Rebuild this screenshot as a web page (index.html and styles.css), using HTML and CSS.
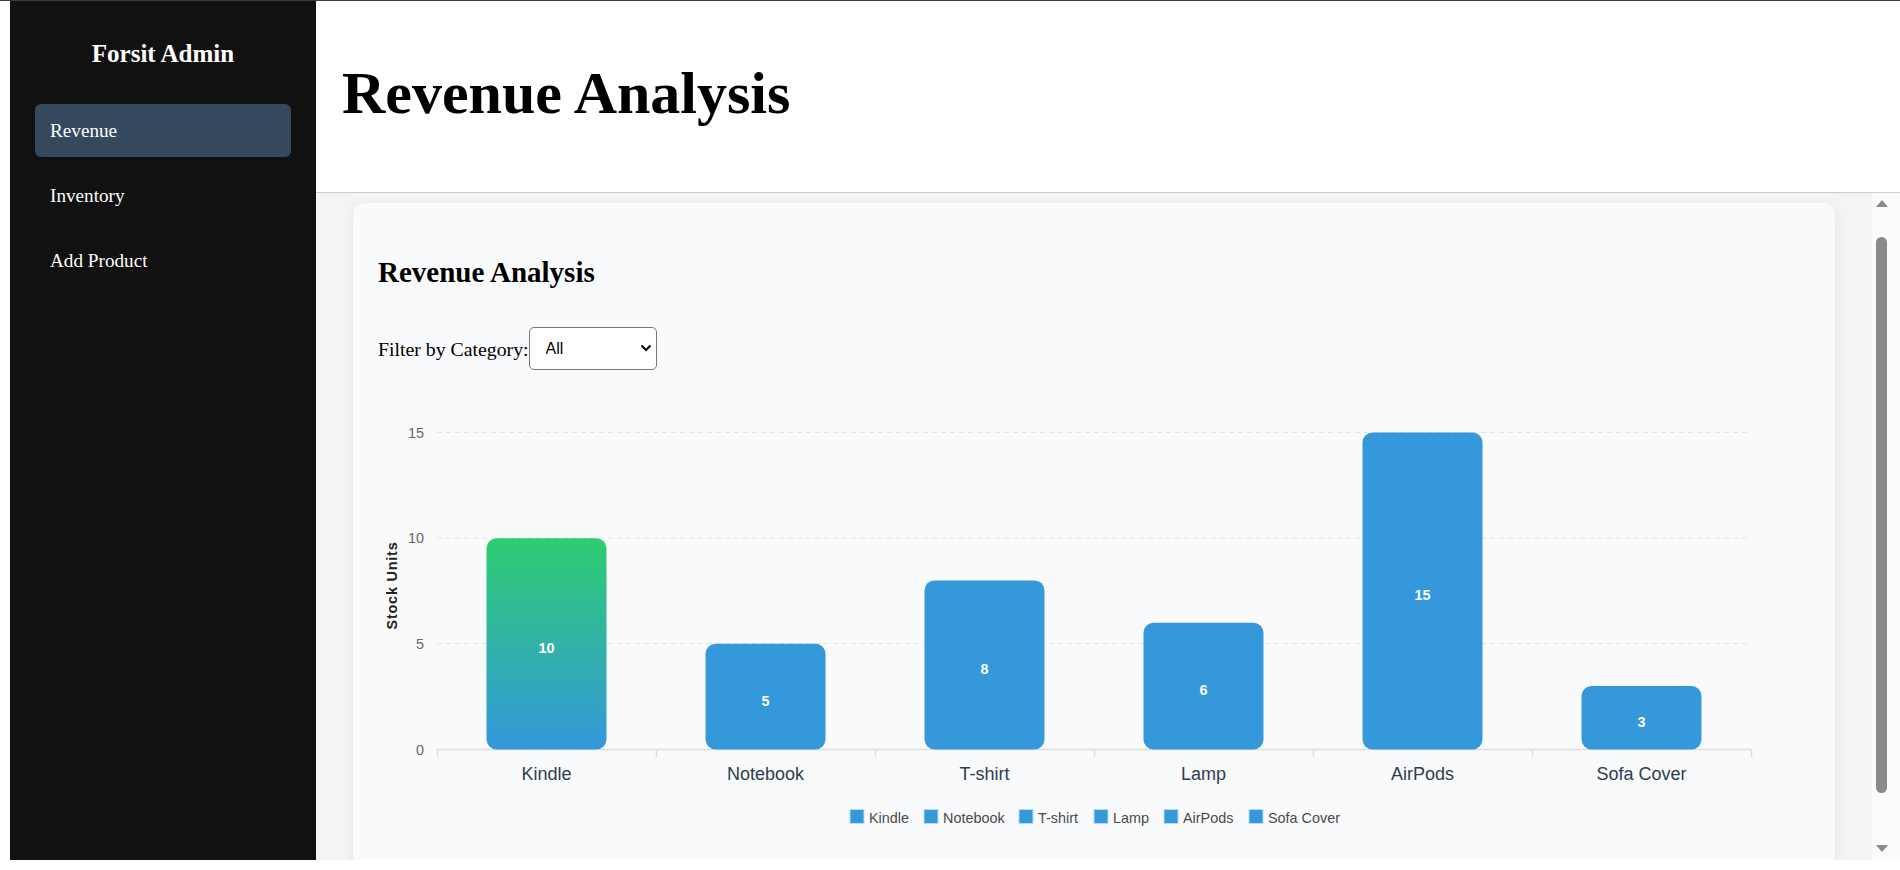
FILE: index.html
```html
<!DOCTYPE html>
<html lang="en">
<head>
<meta charset="utf-8">
<title>Forsit Admin - Revenue Analysis</title>
<link rel="stylesheet" href="styles.css">
</head>
<body>
<div class="app">
  <aside class="sidebar">
    <h2 class="brand">Forsit Admin</h2>
    <nav class="nav">
      <a class="nav-item active" href="#">Revenue</a>
      <a class="nav-item" href="#">Inventory</a>
      <a class="nav-item" href="#">Add Product</a>
    </nav>
  </aside>
  <main class="main">
    <header class="page-header">
      <h1 class="page-title">Revenue Analysis</h1>
    </header>
    <div class="body-row">
      <div class="content">
        <section class="card">
          <h2 class="card-title">Revenue Analysis</h2>
          <div class="filter">
            <label class="filter-label" for="cat">Filter by Category:</label>
            <div class="select-wrap">
              <select id="cat" class="select">
                <option>All</option>
              </select>
              <svg class="chevron" width="12" height="8" viewBox="0 0 12 8"><path d="M1.5 1.5 L6 6 L10.5 1.5" fill="none" stroke="#000" stroke-width="2"/></svg>
            </div>
          </div>
          <svg class="chart" width="1432" height="472" viewBox="0 0 1432 472">
            <defs>
              <linearGradient id="kg" x1="0" y1="0" x2="0" y2="1">
                <stop offset="0" stop-color="#2ecc71"/>
                <stop offset="1" stop-color="#3498db"/>
              </linearGradient>
            </defs>
            <g class="grid">
              <line x1="59" y1="42.5" x2="1373" y2="42.5"/>
              <line x1="59" y1="148" x2="1373" y2="148"/>
              <line x1="59" y1="253.5" x2="1373" y2="253.5"/>
            </g>
            <g class="axis">
              <line x1="59" y1="359.5" x2="1374" y2="359.5"/>
              <line x1="59.5" y1="359" x2="59.5" y2="367"/>
              <line x1="278.5" y1="359" x2="278.5" y2="367"/>
              <line x1="497.5" y1="359" x2="497.5" y2="367"/>
              <line x1="716.5" y1="359" x2="716.5" y2="367"/>
              <line x1="935.5" y1="359" x2="935.5" y2="367"/>
              <line x1="1154.5" y1="359" x2="1154.5" y2="367"/>
              <line x1="1373.5" y1="359" x2="1373.5" y2="367"/>
            </g>
            <g class="ylabels">
              <text x="46" y="47.7">15</text>
              <text x="46" y="153.2">10</text>
              <text x="46" y="258.7">5</text>
              <text x="46" y="364.7">0</text>
            </g>
            <text class="ytitle" transform="translate(13.7 195.5) rotate(-90)">Stock Units</text>
            <g class="bars">
              <rect class="bar-grad" x="108.5" y="148.2" width="120" height="211.3" rx="10"/>
              <rect x="327.5" y="253.8" width="120" height="105.7" rx="10"/>
              <rect x="546.5" y="190.4" width="120" height="169.1" rx="10"/>
              <rect x="765.5" y="232.7" width="120" height="126.8" rx="10"/>
              <rect x="984.5" y="42.5" width="120" height="317" rx="10"/>
              <rect x="1203.5" y="296.1" width="120" height="63.4" rx="10"/>
            </g>
            <g class="values">
              <text x="168.5" y="262.7">10</text>
              <text x="387.5" y="315.5">5</text>
              <text x="606.5" y="283.9">8</text>
              <text x="825.5" y="305">6</text>
              <text x="1044.5" y="209.9">15</text>
              <text x="1263.5" y="336.7">3</text>
            </g>
            <g class="xlabels">
              <text x="168.5" y="390">Kindle</text>
              <text x="387.5" y="390">Notebook</text>
              <text x="606.5" y="390">T-shirt</text>
              <text x="825.5" y="390">Lamp</text>
              <text x="1044.5" y="390">AirPods</text>
              <text x="1263.5" y="390">Sofa Cover</text>
            </g>
            <g class="legend">
              <rect x="472" y="419.5" width="14" height="14"/>
              <text x="491" y="433">Kindle</text>
              <rect x="546" y="419.5" width="14" height="14"/>
              <text x="565" y="433">Notebook</text>
              <rect x="641" y="419.5" width="14" height="14"/>
              <text x="660" y="433">T-shirt</text>
              <rect x="716" y="419.5" width="14" height="14"/>
              <text x="735" y="433">Lamp</text>
              <rect x="786" y="419.5" width="14" height="14"/>
              <text x="805" y="433">AirPods</text>
              <rect x="871" y="419.5" width="14" height="14"/>
              <text x="890" y="433">Sofa Cover</text>
            </g>
          </svg>
        </section>
      </div>
      <div class="scrollbar" aria-hidden="true">
        <svg class="sb-arrow sb-up" width="12" height="7" viewBox="0 0 12 7"><path d="M0 7 L6 0 L12 7 Z" fill="#8a8a8a"/></svg>
        <div class="sb-thumb"></div>
        <svg class="sb-arrow sb-down" width="12" height="7" viewBox="0 0 12 7"><path d="M0 0 L12 0 L6 7 Z" fill="#8a8a8a"/></svg>
      </div>
    </div>
  </main>
</div>
</body>
</html>
```

FILE: styles.css
```css
html, body {
  margin: 0;
  height: 100%;
}

body {
  border-top: 1px solid #3a3a3a;
  background: #ffffff;
  font-family: "Liberation Serif", "Times New Roman", serif;
  overflow: hidden;
}

.app {
  display: flex;
  height: 859px;
  padding-left: 10px;
}

.sidebar {
  width: 306px;
  flex: none;
  box-sizing: border-box;
  background: #121111;
  color: #ffffff;
  padding: 39px 25px 0;
}

.brand {
  margin: 0;
  font-size: 25px;
  line-height: 28px;
  font-weight: bold;
  text-align: center;
}

.nav {
  display: flex;
  flex-direction: column;
  gap: 12px;
  margin-top: 36px;
}

.nav-item {
  display: block;
  padding: 15px;
  font-size: 19.2px;
  line-height: 23px;
  color: #ffffff;
  text-decoration: none;
  border-radius: 6px;
}

.nav-item.active {
  background: #34495e;
}

.main {
  flex: 1;
  min-width: 0;
  display: flex;
  flex-direction: column;
}

.page-header {
  height: 192px;
  flex: none;
  box-sizing: border-box;
  border-bottom: 1px solid #cccccc;
  padding: 58px 0 0 26px;
  background: #ffffff;
}

.page-title {
  margin: 0;
  font-size: 60px;
  line-height: 68px;
  font-weight: bold;
}

.body-row {
  flex: 1;
  min-height: 0;
  display: flex;
}

.content {
  flex: 1;
  min-width: 0;
  overflow: hidden;
  background: #f3f4f6;
  padding: 10px 37px 0;
}

.scrollbar {
  width: 28px;
  flex: none;
  box-sizing: border-box;
  background: #fbfbfb;
  display: flex;
  flex-direction: column;
  align-items: flex-start;
  padding: 7px 0 8px 4px;
}

.sb-arrow {
  display: block;
  flex: none;
}

.sb-thumb {
  width: 11px;
  height: 556px;
  margin: 30px 0 0 0;
  background: #8a8a8a;
  border-radius: 6px;
  flex: none;
}

.sb-down {
  margin-top: auto;
}

.card {
  background: #f9fafb;
  border-radius: 12px;
  box-shadow: 0 2px 14px rgba(0, 0, 0, 0.06);
  padding: 25px;
}

.card-title {
  margin: 28px 0 38px;
  font-size: 29px;
  line-height: 33px;
  font-weight: bold;
}

.filter {
  display: flex;
  align-items: center;
  height: 43px;
}

.filter-label {
  font-size: 19.8px;
  line-height: 22px;
}

.select-wrap {
  position: relative;
}

.select {
  display: block;
  width: 128px;
  height: 43px;
  appearance: none;
  -webkit-appearance: none;
  border: 1px solid #767676;
  border-radius: 5px;
  background: #ffffff;
  font-family: "Liberation Sans", Arial, sans-serif;
  font-size: 16px;
  color: #000000;
  padding: 0 0 0 16px;
  margin: 0;
}

.chevron {
  position: absolute;
  left: 111px;
  top: 17px;
  pointer-events: none;
}

.chart {
  display: block;
  margin-top: 20px;
  font-family: "Liberation Sans", Arial, sans-serif;
}

.grid line {
  stroke: #e3e4e6;
  stroke-width: 1;
  stroke-dasharray: 5 4;
}

.axis line {
  stroke: #dddee0;
  stroke-width: 1.5;
}

.ylabels text {
  font-size: 14.4px;
  fill: #666666;
  text-anchor: end;
}

.ytitle {
  font-size: 14.4px;
  font-weight: bold;
  fill: #222222;
  text-anchor: middle;
  dominant-baseline: central;
  letter-spacing: 0.8px;
}

.bars rect {
  fill: #3498db;
}

.bars rect.bar-grad {
  fill: url(#kg);
}

.values text {
  font-size: 14.4px;
  font-weight: bold;
  fill: #ffffff;
  text-anchor: middle;
}

.xlabels text {
  font-size: 18px;
  fill: #2c3e50;
  text-anchor: middle;
}

.legend rect {
  fill: #3498db;
  stroke: #b9dcf4;
  stroke-width: 1;
}

.legend text {
  font-size: 14.4px;
  fill: #4a4a4a;
}
```
